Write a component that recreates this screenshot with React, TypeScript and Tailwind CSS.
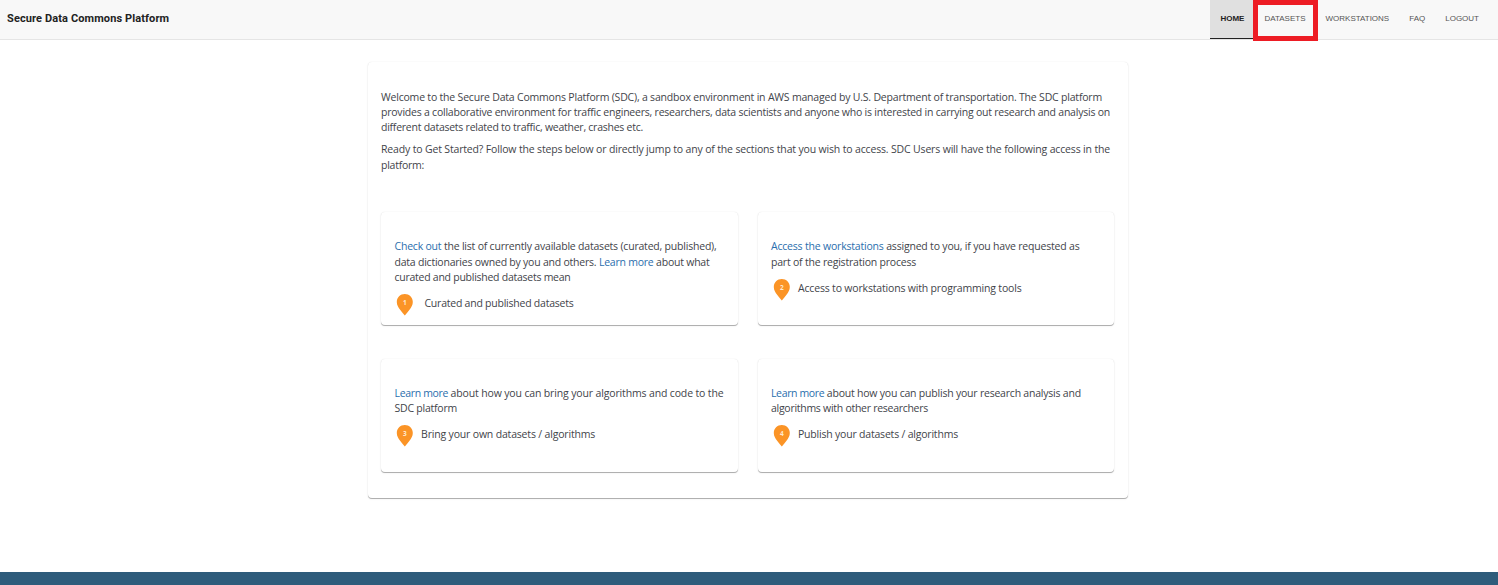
import type { ReactNode } from "react";

function Line({ className = "", children }: { className?: string; children: ReactNode }) {
  return <span className={`block whitespace-pre ${className}`}>{children}</span>;
}

function Link({ className = "", children }: { className?: string; children: ReactNode }) {
  return (
    <a href="#" className={`text-[#2a6ead] ${className}`}>
      {children}
    </a>
  );
}

function Pin({ n }: { n: number }) {
  return (
    <svg width="17" height="23" viewBox="-0.3 -0.8 17 23" className="shrink-0 overflow-visible">
      <path
        d="M8.500 0.200C4 0.200 0.500 3.700 0.500 8.100c0 3 1.500 5.300 3.300 7.900 1.500 2.200 3.200 4.100 4.700 5.800 1.500-1.700 3.200-3.600 4.700-5.800 1.800-2.600 3.300-4.900 3.300-7.900C16.500 3.700 13 0.200 8.500 0.200Z"
        fill="#fb9426"
      />
      <text
        x="8.5"
        y="11.5"
        textAnchor="middle"
        fontSize="6.5"
        fontWeight="700"
        fill="#ffe9cf"
        fontFamily="Open Sans, sans-serif"
      >
        {n}
      </text>
    </svg>
  );
}

const surface =
  "rounded-[4px] bg-white shadow-[0_1px_0_0_#b0b0b0,0_0_1px_0_rgba(0,0,0,0.12),0_1px_2px_0_rgba(0,0,0,0.1)]";

function Card({
  n,
  label,
  className,
  labelClass,
  children,
}: {
  n: number;
  label: string;
  className: string;
  labelClass: string;
  children: ReactNode;
}) {
  return (
    <section className={`h-[113px] ${className} ${surface}`}>
      <p>{children}</p>
      <div className="mt-[8px] flex pl-[1.600px]">
        <Pin n={n} />
        <span className={`pt-[3px] whitespace-pre ${labelClass}`}>{label}</span>
      </div>
    </section>
  );
}

function NavItem({ children }: { children: ReactNode }) {
  return (
    <a href="#" className="flex h-[39px] items-center px-[10px] pb-[1px] text-[#555]">
      {children}
    </a>
  );
}

export default function App() {
  return (
    <div className="flex h-[585px] w-[1498px] flex-col overflow-hidden bg-white font-['Open_Sans',sans-serif] text-[10.5px] leading-[15.4px] text-[#3f444a]">
      <header className="flex h-10 shrink-0 justify-between border-b border-[#e5e5e5] bg-[#f8f8f8] font-['Liberation_Sans',Arial,sans-serif]">
        <h1 className="flex items-center pb-[2px] pl-[7px] font-[Roboto,sans-serif] text-[11px] font-bold tracking-[0.11px] text-[#222]">
          Secure Data Commons Platform
        </h1>
        <nav className="flex pr-[9px] text-[8px]">
          <a
            href="#"
            className="flex h-[39px] w-[44px] items-center border-b border-[#222] bg-[#e0e0e0] pl-[10px] font-bold text-[#222]"
          >
            HOME
          </a>
          <div className="relative">
            <NavItem>DATASETS</NavItem>
            <div className="absolute -left-px top-0 h-[41px] w-[65px] border-[5px] border-[#ed1c24]" />
          </div>
          <NavItem>WORKSTATIONS</NavItem>
          <NavItem>FAQ</NavItem>
          <NavItem>LOGOUT</NavItem>
        </nav>
      </header>

      <main className="flex-1 pl-[368px] pt-[22px]">
        <div className={`h-[436px] w-[760px] px-[13px] pt-[27.500px] ${surface}`}>
          <p className="leading-[15px]">
            <Line className="tracking-[-0.196px]">
              Welcome to the Secure Data Commons Platform (SDC), a sandbox environment in AWS managed by U.S. Department of transportation. The SDC platform
            </Line>
            <Line className="tracking-[-0.221px]">
              provides a collaborative environment for traffic engineers, researchers, data scientists and anyone who is interested in carrying out research and analysis on
            </Line>
            <Line className="tracking-[-0.25px]">different datasets related to traffic, weather, crashes etc.</Line>
          </p>
          <p className="mt-[6px] leading-4">
            <Line className="tracking-[-0.162px]">
              Ready to Get Started? Follow the steps below or directly jump to any of the sections that you wish to access. SDC Users will have the following access in the
            </Line>
            <Line className="tracking-[-0.253px]">platform:</Line>
          </p>

          <div className="mt-[39.500px] grid grid-cols-[357px_356px] gap-x-[20px] gap-y-[34px]">
            <Card n={1} label="Curated and published datasets" className="pl-[13.500px] pt-[27.200px]" labelClass="pl-[11.400px] tracking-[-0.232px]">
              <Line className="tracking-[-0.204px]">
                <Link>Check out</Link> the list of currently available datasets (curated, published),
              </Line>
              <Line className="tracking-[-0.222px]">
                data dictionaries owned by you and others. <Link>Learn more</Link> about what
              </Line>
              <Line className="tracking-[-0.257px]">curated and published datasets mean</Line>
            </Card>
            <Card n={2} label="Access to workstations with programming tools" className="pl-[13px] pt-[27.200px]" labelClass="pl-[8.400px] tracking-[-0.175px]">
              <Line className="tracking-[-0.195px]">
                <Link>Access the workstations</Link> assigned to you, if you have requested as
              </Line>
              <Line className="tracking-[-0.208px]">part of the registration process</Line>
            </Card>
            <Card n={3} label="Bring your own datasets / algorithms" className="pl-[13.500px] pt-[26.600px]" labelClass="pl-[8px] tracking-[-0.178px]">
              <Line className="tracking-[-0.146px]">
                <Link className="tracking-[-0.34px]">Learn more</Link> about how you can bring your algorithms and code to the
              </Line>
              <Line className="tracking-[-0.228px]">SDC platform</Line>
            </Card>
            <Card n={4} label="Publish your datasets / algorithms" className="pl-[13px] pt-[26.600px]" labelClass="pl-[8.400px] tracking-[-0.201px]">
              <Line className="tracking-[-0.213px]">
                <Link className="tracking-[-0.36px]">Learn more</Link> about how you can publish your research analysis and
              </Line>
              <Line className="tracking-[-0.275px]">algorithms with other researchers</Line>
            </Card>
          </div>
        </div>
      </main>

      <footer className="h-[13px] shrink-0 bg-[#2e5c7b]" />
    </div>
  );
}
